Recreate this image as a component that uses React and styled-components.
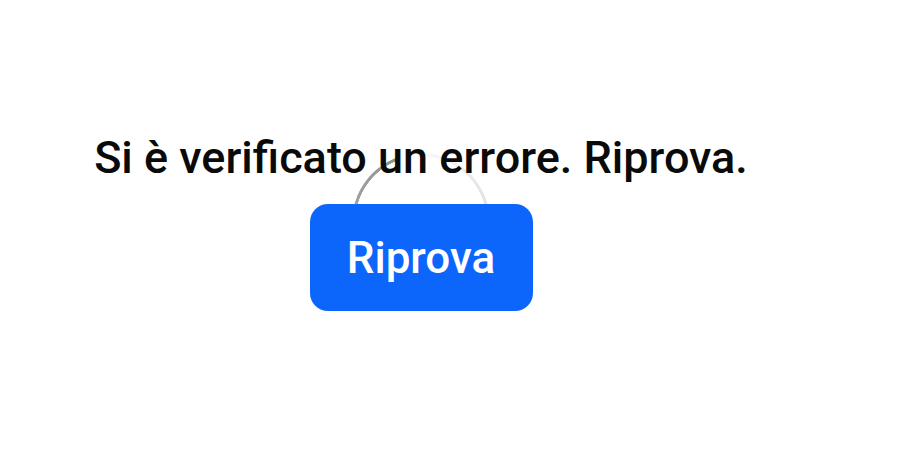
import React from 'react';
import styled, { createGlobalStyle } from 'styled-components';

const GlobalStyle = createGlobalStyle`
  html, body {
    margin: 0;
    padding: 0;
    background: #ffffff;
  }
  body {
    font-family: Roboto, "Noto Sans", sans-serif;
  }
`;

const Page = styled.div`
  width: 100%;
  height: 100vh;
  box-sizing: border-box;
  padding: 132px 68px 0 0;
  display: flex;
  justify-content: center;
  align-items: flex-start;
`;

const ErrorBox = styled.div`
  position: relative;
  display: flex;
  flex-direction: column;
  align-items: center;
  gap: 20px;
`;

// conic ring spinner sitting behind the message and button
const Spinner = styled.div`
  position: absolute;
  left: 50%;
  top: 50%;
  width: 138px;
  height: 138px;
  transform: translate(-50%, -50%);
  z-index: 0;
  border-radius: 50%;
  background: conic-gradient(from -22deg, rgba(140, 140, 140, 0) 0%, rgba(140, 140, 140, 0.95) 100%);
  -webkit-mask: radial-gradient(farthest-side, transparent calc(100% - 3.5px), #000 calc(100% - 3px));
  mask: radial-gradient(farthest-side, transparent calc(100% - 3.5px), #000 calc(100% - 3px));
`;

const Message = styled.p`
  position: relative;
  z-index: 1;
  margin: 0;
  font-size: 45px;
  line-height: 52px;
  font-weight: 500;
  color: #0a0a0a;
  white-space: nowrap;
`;

const RetryButton = styled.button`
  position: relative;
  z-index: 1;
  width: 223px;
  height: 107px;
  border: none;
  border-radius: 18px;
  background: #0d66fc;
  color: #ffffff;
  font-family: Roboto, "Noto Sans", sans-serif;
  font-size: 44px;
  font-weight: 500;
  cursor: pointer;
`;

export default function App() {
  return (
    <>
      <GlobalStyle />
      <Page>
        <ErrorBox>
          <Spinner />
          <Message>Si è verificato un errore. Riprova.</Message>
          <RetryButton type="button">Riprova</RetryButton>
        </ErrorBox>
      </Page>
    </>
  );
}
